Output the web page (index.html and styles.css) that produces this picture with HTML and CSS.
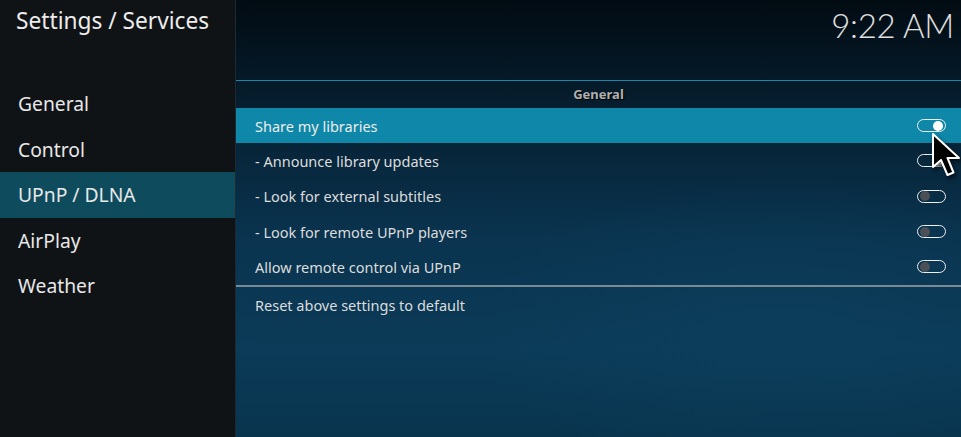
FILE: index.html
```html
<!DOCTYPE html>
<html>
<head>
<meta charset="utf-8">
<link rel="stylesheet" href="styles.css">
</head>
<body>
<div class="app">
  <aside class="sidebar">
    <div class="title">Settings / Services</div>
    <ul class="menu">
      <li class="menu-item">General</li>
      <li class="menu-item">Control</li>
      <li class="menu-item active">UPnP / DLNA</li>
      <li class="menu-item">AirPlay</li>
      <li class="menu-item">Weather</li>
    </ul>
  </aside>
  <main class="panel">
    <header class="topbar">
      <div class="clock">9:22 AM</div>
    </header>
    <div class="group-title">General</div>
    <div class="row focus"><span>Share my libraries</span><span class="toggle on"></span></div>
    <div class="row"><span>- Announce library updates</span><span class="toggle on"></span></div>
    <div class="row"><span>- Look for external subtitles</span><span class="toggle"></span></div>
    <div class="row"><span>- Look for remote UPnP players</span><span class="toggle"></span></div>
    <div class="row"><span>Allow remote control via UPnP</span><span class="toggle"></span></div>
    <div class="separator"></div>
    <div class="row reset"><span>Reset above settings to default</span></div>
  </main>
</div>
<svg class="cursor" width="32" height="46" viewBox="0 0 32 46">
  <path d="M2 2 L2 35 L10 28 L16.5 43 L22.5 40.5 L16.5 26 L28 26 Z" fill="#000" stroke="#fff" stroke-width="2" stroke-linejoin="round"/>
</svg>
</body>
</html>
```
FILE: styles.css
```css
html, body {
  margin: 0;
  padding: 0;
}
body {
  width: 961px;
  height: 437px;
  overflow: hidden;
  background: #0f1316;
  font-family: "Noto Sans", "Open Sans", sans-serif;
  color: #e6e6e6;
  position: relative;
}
.app {
  display: flex;
  height: 437px;
}
.sidebar {
  width: 235px;
  flex: none;
  background: #0f1316;
  border-right: 1px solid #1c2b33;
  display: flex;
  flex-direction: column;
}
.title {
  height: 81px;
  box-sizing: border-box;
  padding: 5px 0 0 16px;
  font-size: 22.7px;
  line-height: 32px;
  color: #ececec;
}
.menu {
  list-style: none;
  margin: 0;
  padding: 0;
}
.menu-item {
  height: 45.5px;
  line-height: 45.5px;
  padding-left: 18px;
  font-size: 19.3px;
  color: #e8e8e8;
}
.menu-item.active {
  background: #0e4b5d;
}
.panel {
  flex: 1;
  display: flex;
  flex-direction: column;
  background:
    radial-gradient(ellipse 60% 50% at 75% 75%, rgba(14,70,100,0.35), rgba(14,70,100,0) 70%),
    linear-gradient(180deg, #020b12 0%, #061f30 25%, #0a3450 55%, #0b3b58 80%, #09344e 100%);
}
.topbar {
  height: 80px;
  border-bottom: 1px solid #1688ab;
  display: flex;
  justify-content: flex-end;
  align-items: flex-start;
}
.clock {
  font-family: "Lato", "Noto Sans", sans-serif;
  font-weight: 300;
  font-size: 33px;
  line-height: 40px;
  padding: 5px 7px 0 0;
  color: #e0e0e0;
  letter-spacing: -0.3px;
}
.group-title {
  height: 27px;
  line-height: 27px;
  text-align: center;
  font-size: 13px;
  font-weight: bold;
  color: #b0b0b0;
  text-shadow: 1px 1px 1px #000;
}
.row {
  height: 35.3px;
  display: flex;
  align-items: center;
  justify-content: space-between;
  padding: 0 15px 0 19px;
  font-size: 14.5px;
  color: #dcdcdc;
}
.row.focus {
  background: #0f87a8;
  color: #ececec;
}
.row.reset {
  height: 36px;
}
.separator {
  height: 2px;
  background: #7a8a92;
  margin-top: 1px;
}
.toggle {
  width: 27px;
  height: 11px;
  border: 1.5px solid #f0f0f0;
  border-radius: 8px;
  position: relative;
  flex: none;
}
.toggle::after {
  content: "";
  position: absolute;
  top: 0.5px;
  left: 2px;
  width: 10px;
  height: 10px;
  border-radius: 50%;
  background: #4a5055;
}
.toggle.on::after {
  left: auto;
  right: 2px;
  background: #fff;
}
.cursor {
  position: absolute;
  left: 931px;
  top: 132px;
  filter: drop-shadow(2px 3px 2px rgba(0,0,0,0.6));
}
```
